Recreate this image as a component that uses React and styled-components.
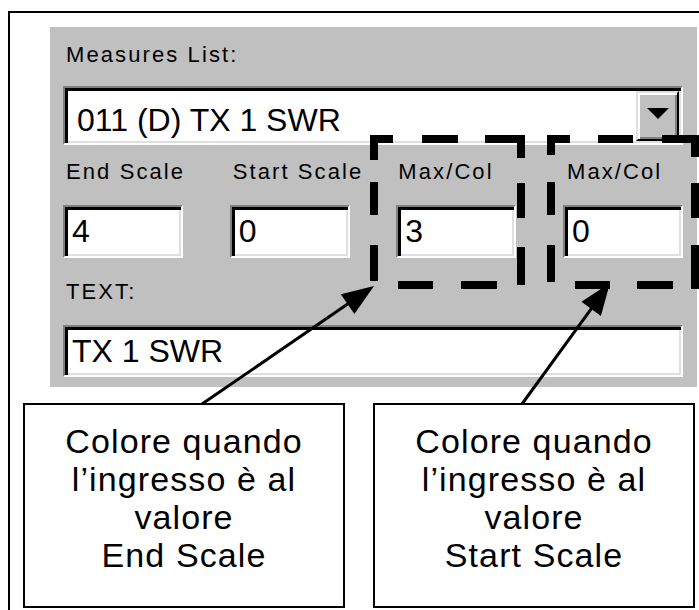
import React from 'react';
import styled, { createGlobalStyle, css } from 'styled-components';

const Global = createGlobalStyle`
  html, body { margin: 0; padding: 0; background: #fff; overflow: hidden; }
  body { width: 699px; height: 610px; }
`;

const Page = styled.div`
  position: relative;
  width: 699px;
  height: 610px;
  overflow: hidden;
  background: #fff;
`;

const Frame = styled.div`
  margin: 11px 0 0 8px;
  border-top: 2px solid #000;
  border-left: 2px solid #000;
  width: 720px;
  height: 620px;
  box-sizing: border-box;
  padding-top: 14px;
`;

const Panel = styled.div`
  margin-left: 40px;
  width: 647px;
  height: 360px;
  box-sizing: border-box;
  background: #c0c0c0;
  padding: 15px 14px 0 13px;
  display: flex;
  flex-direction: column;
  font-family: "Liberation Sans", Arial, sans-serif;
  color: #000;
`;

const Label = styled.div`
  font-size: 22px;
  line-height: 26px;
  letter-spacing: 2.1px;
  padding-left: ${p => p.$indent ?? 3}px;
  margin-top: ${p => p.$mt || 0}px;
  white-space: nowrap;
`;

const sunken = css`
  box-sizing: border-box;
  border: 2px solid;
  border-color: #808080 #fff #fff #808080;
  box-shadow: inset 3px 3px 0 #000, inset -2px -2px 0 #dfdfdf;
  background: #fff;
  padding: 3px 2px 2px 3px;
`;

const Combo = styled.div`
  ${sunken};
  margin-top: 18px;
  width: 620px;
  height: 59px;
  display: flex;
`;

const ComboText = styled.div`
  flex: 1;
  padding: 10px 0 0 9px;
  font-size: 32px;
  line-height: 39px;
  white-space: nowrap;
`;

const DropButton = styled.div`
  box-sizing: border-box;
  width: 43px;
  height: 100%;
  background: #c0c0c0;
  border: 2px solid;
  border-color: #dfdfdf #000 #000 #dfdfdf;
  box-shadow: inset 2px 2px 0 #fff, inset -2px -2px 0 #808080;
  display: flex;
  align-items: center;
  justify-content: center;
  padding-bottom: 6px;
`;

const FieldGrid = styled.div`
  margin-top: 14px;
  width: 620px;
  display: grid;
  grid-template-columns: repeat(4, 120px);
  justify-content: space-between;
`;

const Field = styled.div`
  display: flex;
  flex-direction: column;
`;

const Input = styled.div`
  ${sunken};
  margin-top: 20px;
  width: ${p => p.$w || 120}px;
  height: ${p => p.$h || 53}px;
  font-size: 32px;
  line-height: ${p => (p.$h || 53) - 10}px;
  padding-left: 7px;
  white-space: nowrap;
`;

const Callouts = styled.div`
  margin: 16px 0 0 13px;
  display: flex;
  gap: 28px;
`;

const Callout = styled.div`
  box-sizing: border-box;
  width: 322px;
  height: 205px;
  border: 2px solid #000;
  padding-top: 17px;
  text-align: center;
  font-family: "Liberation Sans", Arial, sans-serif;
  font-size: 34px;
  line-height: 38px;
  letter-spacing: 1.1px;
  color: #000;
`;

const Overlay = styled.svg`
  position: absolute;
  left: 0;
  top: 0;
  width: 699px;
  height: 610px;
  pointer-events: none;
`;

const H = (y, segs) => segs.map(([a, b]) => ({ x: a, y, w: b - a, h: 8 }));
const V = (x, segs) => segs.map(([a, b]) => ({ x, y: a, w: 8, h: b - a }));

const dashes = [
  ...H(135, [[370, 393], [422, 458], [485, 525]]),
  ...V(370, [[135, 160], [182, 215], [245, 281]]),
  ...V(517, [[135, 158], [183, 218], [247, 285]]),
  ...H(281, [[398, 433], [461, 497]]),
  ...H(135, [[547, 570], [598, 633], [662, 699]]),
  ...V(547, [[135, 155], [182, 215], [245, 282]]),
  ...V(691, [[135, 157], [183, 218], [245, 289]]),
  ...H(281, [[575, 610], [637, 673]]),
];

function Arrow({ tail, tip }) {
  const dx = tip[0] - tail[0];
  const dy = tip[1] - tail[1];
  const len = Math.hypot(dx, dy);
  const ux = dx / len, uy = dy / len;
  const nx = -uy, ny = ux;
  const L = 32, W = 12;
  const bx = tip[0] - L * ux, by = tip[1] - L * uy;
  const pts = [
    [tip[0], tip[1]],
    [bx + W * nx, by + W * ny],
    [bx - W * nx, by - W * ny],
  ].map(p => p.join(',')).join(' ');
  return (
    <g>
      <line x1={tail[0]} y1={tail[1]} x2={bx + 4 * ux} y2={by + 4 * uy} stroke="#000" strokeWidth="3" />
      <polygon points={pts} fill="#000" />
    </g>
  );
}

export default function App() {
  return (
    <Page>
      <Global />
      <Frame>
        <Panel>
          <Label>Measures List:</Label>
          <Combo>
            <ComboText>011 (D) TX 1 SWR</ComboText>
            <DropButton>
              <svg width="22" height="11" viewBox="0 0 22 11">
                <polygon points="0,0 22,0 11,11" fill="#000" />
              </svg>
            </DropButton>
          </Combo>
          <FieldGrid>
            <Field>
              <Label>End Scale</Label>
              <Input>4</Input>
            </Field>
            <Field>
              <Label>Start Scale</Label>
              <Input>0</Input>
            </Field>
            <Field>
              <Label $indent={2}>Max/Col</Label>
              <Input>3</Input>
            </Field>
            <Field>
              <Label $indent={4}>Max/Col</Label>
              <Input>0</Input>
            </Field>
          </FieldGrid>
          <Label $mt={21}>TEXT:</Label>
          <Input $w={620} $h={52}>TX 1 SWR</Input>
        </Panel>
        <Callouts>
          <Callout>
            Colore quando<br />
            l’ingresso è al<br />
            valore<br />
            End Scale
          </Callout>
          <Callout>
            Colore quando<br />
            l’ingresso è al<br />
            valore<br />
            Start Scale
          </Callout>
        </Callouts>
      </Frame>
      <Overlay viewBox="0 0 699 610">
        {dashes.map((d, i) => (
          <rect key={i} x={d.x} y={d.y} width={d.w} height={d.h} fill="#000" />
        ))}
        <Arrow tail={[202, 404]} tip={[374, 286]} />
        <Arrow tail={[522, 404]} tip={[610, 283]} />
      </Overlay>
    </Page>
  );
}
